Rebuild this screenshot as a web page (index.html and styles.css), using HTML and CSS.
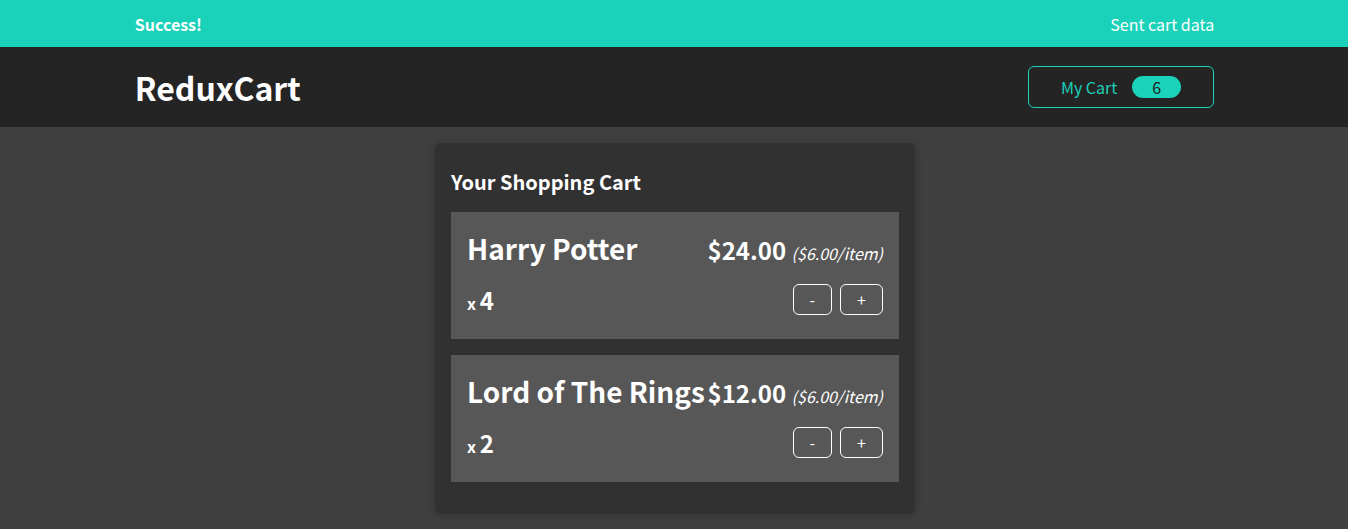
FILE: index.html
```html
<!DOCTYPE html>
<html>
<head>
<meta charset="utf-8">
<link rel="stylesheet" href="styles.css">
</head>
<body>
<section class="notification success">
  <h2>Success!</h2>
  <p>Sent cart data</p>
</section>
<header class="header">
  <h1>ReduxCart</h1>
  <nav>
    <ul>
      <li>
        <button class="cart-button">
          <span>My Cart</span>
          <span class="badge">6</span>
        </button>
      </li>
    </ul>
  </nav>
</header>
<main class="main">
  <section class="card cart">
    <h2>Your Shopping Cart</h2>
    <ul>
      <li class="item">
        <header>
          <h3>Harry Potter</h3>
          <div class="price">$24.00 <span class="itemprice">($6.00/item)</span></div>
        </header>
        <div class="details">
          <div class="quantity">x <span>4</span></div>
          <div class="actions">
            <button>-</button>
            <button>+</button>
          </div>
        </div>
      </li>
      <li class="item">
        <header>
          <h3>Lord of The Rings</h3>
          <div class="price">$12.00 <span class="itemprice">($6.00/item)</span></div>
        </header>
        <div class="details">
          <div class="quantity">x <span>2</span></div>
          <div class="actions">
            <button>-</button>
            <button>+</button>
          </div>
        </div>
      </li>
    </ul>
  </section>
</main>
</body>
</html>
```
FILE: styles.css
```css
* { box-sizing: border-box; }
body {
  margin: 0;
  background-color: #3f3f3f;
  font-family: "Noto Sans CJK JP", sans-serif;
}
.notification {
  width: 100%;
  height: 47px;
  display: flex;
  justify-content: space-between;
  align-items: center;
  padding: 0.5rem calc(10% - 1px) 0.5rem 10%;
  color: white;
}
.notification h2, .notification p {
  font-size: 1rem;
  margin: 0;
}
.notification p { font-weight: normal; }
.success { background-color: #1ad1b9; }
.header {
  width: 100%;
  height: 5rem;
  padding: 0 calc(10% - 1px) 0 10%;
  background-color: #252424;
  display: flex;
  justify-content: space-between;
  align-items: center;
}
.header h1 { color: white; margin: 0; font-size: 2rem; }
.header ul { list-style: none; margin: 0; padding: 0; display: flex; }
.cart-button {
  font: inherit;
  background-color: transparent;
  border: 1px solid #1ad1b9;
  border-radius: 6px;
  color: #1ad1b9;
  padding: 0 2rem;
  display: flex;
  justify-content: space-between;
  align-items: center;
  height: 42px;
}
.badge {
  background-color: #1ad1b9;
  border-radius: 30px;
  padding: 0 1.25rem;
  height: 22px;
  line-height: 22px;
  margin-left: 15px;
  color: #1d1d1d;
}
.main { padding-left: 2px; }
.card {
  padding: 1rem;
  margin: 1rem auto;
  border-radius: 6px;
  background-color: #313131;
  box-shadow: 0 1px 8px rgba(0, 0, 0, 0.2);
}
.cart { max-width: 30rem; color: white; }
.cart h2 { font-size: 1.25rem; margin: 0.5rem 0; }
.cart ul { list-style: none; margin: 0; padding: 0; }
.item { margin: 1rem 0; background-color: #575757; padding: 1rem; }
.item header { display: flex; justify-content: space-between; align-items: baseline; }
.item h3 { margin: 0 0 0.5rem 0; font-size: 1.75rem; }
.price { font-size: 1.5rem; font-weight: bold; }
.itemprice { font-weight: normal; font-size: 1rem; font-style: italic; }
.details { display: flex; justify-content: space-between; align-items: center; }
.quantity { font-weight: bold; }
.quantity span { font-size: 1.5rem; }
.actions { display: flex; justify-content: flex-end; margin: 0.5rem 0; }
.actions button {
  font: inherit;
  background-color: transparent;
  border: 1px solid white;
  border-radius: 6px;
  margin-left: 0.5rem;
  padding: 0.15rem 1rem;
  color: white;
}
```
